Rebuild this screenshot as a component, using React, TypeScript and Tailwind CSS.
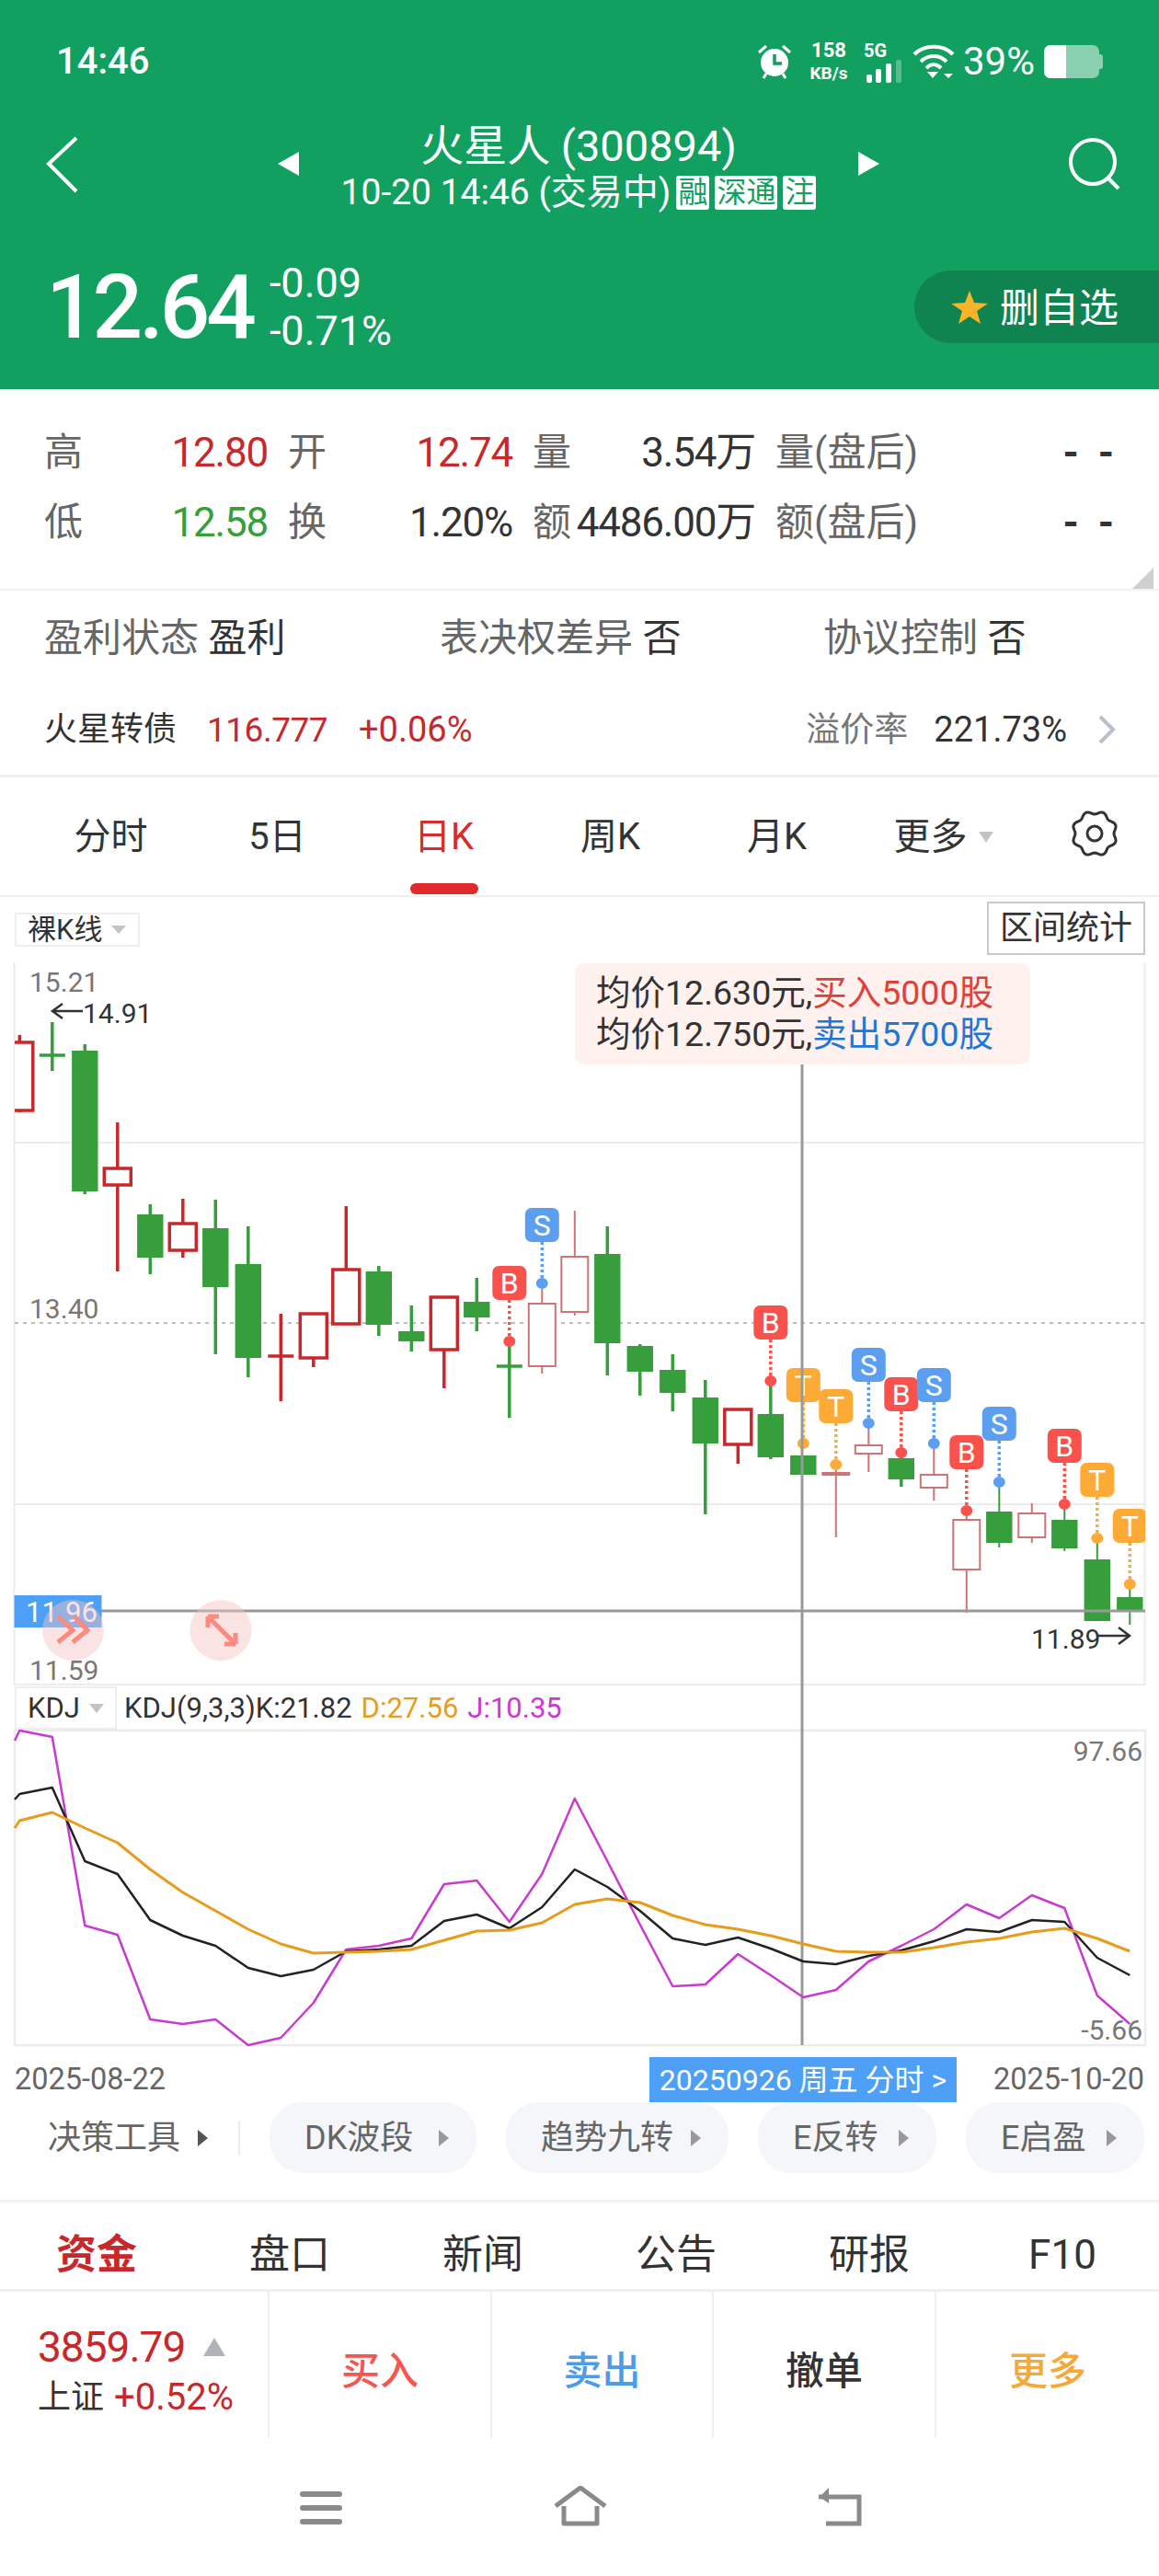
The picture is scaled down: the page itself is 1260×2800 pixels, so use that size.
import React from 'react';

const RED = '#c8282c';
const GREEN = '#369e3a';
const THIN_RED = '#cf7474';

// x of candle i, in page pixels
const cx = (i: number) => 21.3 + i * 35.5;

// [index, high, body top, body bottom, low, kind]: r = hollow red, t = thin hollow red, g = solid green
const candles: [number, number, number, number, number, string][] = [
  [0, 1125, 1133, 1207, 1209, 'r'],
  [1, 1111, 1147, 1147, 1164, 'g'],
  [2, 1135, 1142, 1295, 1298, 'g'],
  [3, 1220, 1270, 1288, 1382, 'r'],
  [4, 1309, 1320, 1367, 1385, 'g'],
  [5, 1303, 1330, 1359, 1367, 'r'],
  [6, 1304, 1335, 1399, 1472, 'g'],
  [7, 1333, 1374, 1476, 1497, 'g'],
  [8, 1428, 1474, 1474, 1523, 'r'],
  [9, 1428, 1428, 1476, 1486, 'r'],
  [10, 1311, 1380, 1439, 1439, 'r'],
  [11, 1376, 1382, 1440, 1452, 'g'],
  [12, 1419, 1447, 1458, 1469, 'g'],
  [13, 1409, 1410, 1467, 1509, 'r'],
  [14, 1389, 1415, 1432, 1447, 'g'],
  [15, 1463, 1485, 1485, 1541, 'g'],
  [16, 1401, 1417, 1485, 1493, 't'],
  [17, 1316, 1366, 1426, 1430, 't'],
  [18, 1333, 1363, 1460, 1495, 'g'],
  [19, 1461, 1463, 1491, 1517, 'g'],
  [20, 1472, 1489, 1514, 1534, 'g'],
  [21, 1500, 1519, 1569, 1646, 'g'],
  [22, 1532, 1532, 1570, 1591, 'r'],
  [23, 1502, 1537, 1584, 1586, 'g'],
  [24, 1582, 1582, 1603, 1603, 'g'],
  [25, 1593, 1601, 1603, 1671, 't'],
  [26, 1550, 1571, 1580, 1600, 't'],
  [27, 1580, 1585, 1608, 1616, 'g'],
  [28, 1572, 1603, 1617, 1631, 't'],
  [29, 1647, 1652, 1706, 1753, 't'],
  [30, 1615, 1643, 1677, 1682, 'g'],
  [31, 1634, 1645, 1671, 1677, 't'],
  [32, 1639, 1652, 1683, 1686, 'g'],
  [33, 1676, 1695, 1762, 1762, 'g'],
  [34, 1727, 1736, 1751, 1766, 'g'],
];

// [candle index, letter, badge top]
const marks: [number, string, number][] = [
  [15, 'B', 1376],
  [16, 'S', 1313],
  [23, 'B', 1419],
  [24, 'T', 1487],
  [25, 'T', 1510],
  [26, 'S', 1465],
  [27, 'B', 1497],
  [28, 'S', 1487],
  [29, 'B', 1560],
  [30, 'S', 1529],
  [32, 'B', 1553],
  [33, 'T', 1590],
  [34, 'T', 1640],
];
const markColor: Record<string, string> = { B: '#f9524c', S: '#5c9ff0', T: '#fdab36' };

const kLine = [1950, 1943, 2023, 2037, 2087, 2104, 2115, 2139, 2148, 2141, 2121, 2119, 2115, 2088, 2081, 2096, 2073, 2032, 2051, 2077, 2107, 2114, 2106, 2118, 2132, 2135, 2126, 2120, 2110, 2097, 2100, 2087, 2089, 2128, 2147];
const dLine = [1979, 1970, 1987, 2003, 2032, 2057, 2077, 2097, 2113, 2123, 2122, 2121, 2119, 2109, 2099, 2098, 2090, 2070, 2064, 2068, 2082, 2092, 2097, 2104, 2113, 2121, 2122, 2122, 2117, 2111, 2107, 2100, 2096, 2107, 2121];
const jLine = [1881, 1888, 2093, 2103, 2195, 2200, 2195, 2223, 2215, 2177, 2119, 2115, 2107, 2048, 2044, 2089, 2037, 1955, 2023, 2092, 2159, 2157, 2124, 2147, 2171, 2163, 2132, 2115, 2097, 2070, 2085, 2060, 2074, 2169, 2200];

const toPoints = (ys: number[], startY: number) =>
  `16,${startY} ` + ys.map((y, i) => `${cx(i)},${y}`).join(' ');

function Candle({ c }: { c: (typeof candles)[number] }) {
  const [i, hi, top, bot, lo, kind] = c;
  const x = cx(i);
  const color = kind === 'g' ? GREEN : kind === 'r' ? RED : THIN_RED;
  const thin = kind === 't' || i >= 30;
  const wick = thin ? 2 : 3.5;
  if (top === bot) {
    return (
      <g stroke={color} strokeWidth={wick}>
        <line x1={x} x2={x} y1={hi} y2={lo} />
        <line x1={x - 14} x2={x + 14} y1={top} y2={top} />
      </g>
    );
  }
  if (kind === 'g') {
    return (
      <g>
        <line x1={x} x2={x} y1={hi} y2={lo} stroke={color} strokeWidth={wick} />
        <rect x={x - 14.2} y={top} width={28.4} height={bot - top} fill={color} />
      </g>
    );
  }
  const sw = kind === 'r' ? 3.5 : 2;
  return (
    <g stroke={color} strokeWidth={wick}>
      <line x1={x} x2={x} y1={hi} y2={top} />
      <line x1={x} x2={x} y1={bot} y2={lo} />
      <rect x={x - 14.5} y={top} width={29} height={bot - top} fill="#fff" strokeWidth={sw} />
    </g>
  );
}

function Mark({ i, letter, top }: { i: number; letter: string; top: number }) {
  const x = cx(i);
  const color = markColor[letter];
  return (
    <g>
      <line x1={x} x2={x} y1={top + 37} y2={top + 80} stroke={color} strokeWidth={3.5} strokeDasharray="3 3" />
      <ellipse cx={x} cy={top + 82} rx={6.5} ry={6} fill={color} />
      <rect x={x - 18.5} y={top} width={37} height={37} rx={7} fill={color} />
      <text x={x} y={top + 30} textAnchor="middle" fontSize={32} fill="#fff">
        {letter}
      </text>
    </g>
  );
}

function ChartPanel() {
  return (
    <div className="relative h-[1261px]">
      <svg viewBox="0 975 1260 1261" className="block h-[1261px] w-[1260px]">
        <defs>
          <clipPath id="kline">
            <rect x="16" y="1046" width="1229" height="786" />
          </clipPath>
        </defs>
        {/* frame + grid */}
        <g stroke="#ececec" strokeWidth={2} fill="none">
          <line x1="15.5" x2="15.5" y1="1046" y2="1832" />
          <line x1="1244.5" x2="1244.5" y1="1046" y2="1832" />
          <line x1="16" x2="1245" y1="1242" y2="1242" />
          <line x1="16" x2="1245" y1="1635" y2="1635" />
          <line x1="16" x2="1245" y1="1831" y2="1831" />
          <rect x="16" y="1881" width="1229" height="342" strokeWidth={2.5} />
        </g>
        <line x1="16" x2="1245" y1="1438" y2="1438" stroke="#a8a8a8" strokeWidth={1.5} strokeDasharray="4 5" />

        <text x="32" y="1078" fontSize={30} fill="#777">15.21</text>
        <text x="32" y="1433" fontSize={30} fill="#777">13.40</text>
        <text x="32" y="1826" fontSize={30} fill="#777">11.59</text>

        <g clipPath="url(#kline)">
          {candles.map((c) => (
            <Candle key={c[0]} c={c} />
          ))}
          {marks.map(([i, letter, top]) => (
            <Mark key={i} i={i} letter={letter} top={top} />
          ))}
        </g>

        {/* max / min arrows */}
        <g stroke="#333" strokeWidth={2.5} fill="none">
          <path d="M90 1099H57M68 1091L57 1099L68 1107" />
          <path d="M1192 1778H1228M1216 1769L1228 1778L1216 1787" />
        </g>
        <text x="90" y="1112" fontSize={30} fill="#333">14.91</text>
        <text x="1121" y="1792" fontSize={30} fill="#333">11.89</text>

        {/* crosshair */}
        <line x1="16" x2="1245" y1="1751" y2="1751" stroke="#999" strokeWidth={3} />
        <line x1="872" x2="872" y1="1157" y2="2223" stroke="#999" strokeWidth={3} />
        <rect x="15.5" y="1734" width="95" height="35" fill="#4da0f5" />
        <text x="28" y="1763" fontSize={31} fill="#fff">11.96</text>

        {/* floating controls */}
        <ellipse cx="79.5" cy="1772" rx="33.5" ry="33" fill="#f5c4c0" fillOpacity={0.45} />
        <path d="M63 1757L79 1772L63 1785M81 1757L95 1772L79 1785" stroke="#fb8a80" strokeWidth={5} fill="none" />
        <ellipse cx="240" cy="1772" rx="33.5" ry="33" fill="#f5c4c0" fillOpacity={0.45} />
        <path d="M226 1757L256 1787M226 1757V1769M226 1757H238M256 1787V1775M256 1787H244" stroke="#fb8a80" strokeWidth={5} fill="none" />

        {/* KDJ */}
        <g fill="none" strokeWidth={2.5} strokeLinejoin="round">
          <polyline points={toPoints(jLine, 1892)} stroke="#c93ad0" />
          <polyline points={toPoints(kLine, 1956)} stroke="#222" />
          <polyline points={toPoints(dLine, 1987)} stroke="#e89c1c" strokeWidth={3} />
        </g>
        <text x="1242" y="1914" fontSize={30} fill="#777" textAnchor="end">97.66</text>
        <text x="1242" y="2217" fontSize={30} fill="#777" textAnchor="end">-5.66</text>
      </svg>

      {/* chart toolbar bits that sit over the drawing */}
      <div className="absolute left-[16px] top-[17px] flex h-[37px] w-[136px] items-center gap-[10px] border-2 border-[#eeeeee] pl-[12px] text-[31px] leading-none text-[#333]">
        裸K线
        <span className="h-0 w-0 border-x-[8px] border-t-[9px] border-x-transparent border-t-[#c4c4c4]" />
      </div>
      <div className="absolute left-[1073px] top-[5px] flex h-[58px] w-[172px] items-center justify-center border-2 border-[#c9c9c9] text-[36px] leading-none text-[#333]">
        区间统计
      </div>
      <div className="absolute left-[625px] top-[72px] flex h-[110px] w-[495px] flex-col justify-center rounded-[10px] bg-[#fff1ee] pl-[23px] text-[37.5px] leading-[45px] text-[#333]">
        <div>
          均价12.630元,<span className="text-[#e0403a]">买入5000股</span>
        </div>
        <div>
          均价12.750元,<span className="text-[#1c78d8]">卖出5700股</span>
        </div>
      </div>
      <div className="absolute left-[16px] top-[858px] flex h-[47px] w-[111px] items-center gap-[10px] border-2 border-[#eeeeee] pl-[12px] text-[31px] leading-none text-[#333]">
        KDJ
        <span className="h-0 w-0 border-x-[8px] border-t-[10px] border-x-transparent border-t-[#c4c4c4]" />
      </div>
      <div className="absolute left-[135px] top-[858px] flex h-[47px] items-center gap-[10px] text-[31px] leading-none">
        <span className="text-[#333]">KDJ(9,3,3)K:21.82</span>
        <span className="text-[#e89c1c]">D:27.56</span>
        <span className="text-[#c93ad0]">J:10.35</span>
      </div>
    </div>
  );
}

function StatusIcons() {
  return (
    <div className="flex items-center text-white">
      <svg width="40" height="40" viewBox="0 0 40 40" className="mr-[18px]">
        <circle cx="20" cy="21" r="15" fill="#fff" />
        <path d="M20 12V22H28" stroke="#12a061" strokeWidth="3.5" fill="none" />
        <path d="M3 10L11 3M37 10L29 3" stroke="#fff" strokeWidth="3" />
        <path d="M8 38L11 33M32 38L29 33" stroke="#fff" strokeWidth="3" />
      </svg>
      <div className="mr-[17px] flex w-[42px] flex-col items-center text-[22px] font-bold leading-[25px]">
        <span>158</span>
        <span className="text-[19px]">KB/s</span>
      </div>
      <div className="mr-[11px] flex w-[42px] flex-col">
        <span className="text-[20px] font-bold leading-[20px]">5G</span>
        <svg width="42" height="25" viewBox="0 0 42 25">
          <rect x="3" y="16" width="6" height="9" rx="2" fill="#fff" />
          <rect x="13" y="10" width="6" height="15" rx="2" fill="#fff" />
          <rect x="24" y="4" width="6" height="21" rx="2" fill="#fff" />
          <rect x="35" y="0" width="6" height="25" rx="2" fill="#fff" fillOpacity={0.3} />
        </svg>
      </div>
      <svg width="46" height="38" viewBox="0 0 46 38" className="mr-[9px]" fill="none" stroke="#fff" strokeWidth="4">
        <path d="M2 11C13 0 33 0 44 11" />
        <path d="M9 19C17 11 29 11 37 19" />
        <path d="M15 26C20 21 26 21 31 26" />
        <path d="M16 30H28L22 37Z" fill="#fff" stroke="none" />
        <path d="M34 32H44L39 37Z" fill="#fff" stroke="none" />
      </svg>
      <span className="mr-[10px] text-[42px] leading-none">39%</span>
      <div className="flex items-center">
        <div className="flex h-[36px] w-[60px] overflow-hidden rounded-[7px] bg-white/50">
          <div className="w-[24px] bg-white" />
        </div>
        <span className="h-[16px] w-[4px] rounded-r-[3px] bg-white/50" />
      </div>
    </div>
  );
}

function Header() {
  return (
    <header className="h-[423px] bg-[#12a061] text-white">
      <div className="flex h-[134px] items-center justify-between pl-[61px] pr-[61px]">
        <span className="text-[40px] font-medium leading-none">14:46</span>
        <StatusIcons />
      </div>
      <div className="flex h-[100px] items-start justify-between pl-[50px] pr-[42px]">
        <svg width="36" height="62" viewBox="0 0 36 62" className="mt-[14px]" fill="none" stroke="#fff" strokeWidth="4">
          <path d="M33 2L3 30L33 60" />
        </svg>
        <div className="ml-[10px] flex items-start gap-[46px]">
          <span className="mt-[31px] h-0 w-0 border-y-[13px] border-r-[23px] border-y-transparent border-r-white" />
          <div className="flex flex-col items-center">
            <div className="text-[47px] leading-[50px]">火星人 (300894)</div>
            <div className="mt-[2px] flex items-center text-[39px] leading-[46px]">
              10-20 14:46 (交易中)
              <span className="ml-[6px] rounded-[3px] bg-white px-[2px] text-[32px] leading-[37px] text-[#12a061]">融</span>
              <span className="ml-[6px] rounded-[3px] bg-white px-[2px] text-[32px] leading-[37px] text-[#12a061]">深通</span>
              <span className="ml-[6px] rounded-[3px] bg-white px-[2px] text-[32px] leading-[37px] text-[#12a061]">注</span>
            </div>
          </div>
          <span className="mt-[31px] h-0 w-0 border-y-[13px] border-l-[23px] border-y-transparent border-l-white" />
        </div>
        <svg width="56" height="56" viewBox="0 0 56 56" className="mt-[16px]" fill="none" stroke="#fff" strokeWidth="4">
          <circle cx="26" cy="26" r="24" />
          <path d="M42 43L54 55" />
        </svg>
      </div>
      <div className="mt-[60px] flex h-[79px] items-center justify-between pl-[50px]">
        <div className="flex items-center gap-[18px]">
          <span className="text-[96px] font-medium leading-none tracking-[-4px]">12.64</span>
          <div className="flex flex-col text-[45px] leading-[52px]">
            <span>-0.09</span>
            <span>-0.71%</span>
          </div>
        </div>
        <div className="flex h-[79px] w-[266px] items-center gap-[13px] rounded-l-full bg-[#0f8350] pl-[40px] pt-[4px] text-[43px] leading-none">
          <svg width="40" height="36" viewBox="0 0 40 36" className="-mt-[4px]">
            <path d="M20 0L25 13L40 14L28 22L32 36L20 28L8 36L12 22L0 14L15 13Z" fill="#fbb428" />
          </svg>
          删自选
        </div>
      </div>
    </header>
  );
}

function Stat({ label, value, color = 'text-[#333]' }: { label: string; value: string; color?: string }) {
  const valueClass = value === '- -' ? 'font-bold tracking-[5px] mr-[-5px]' : 'tracking-[-1.2px]';
  return (
    <div className="flex items-center justify-between whitespace-nowrap">
      <span className="text-[#666]">{label}</span>
      <span className={`text-[44px] ${valueClass} ${color}`}>{value}</span>
    </div>
  );
}

function Quote() {
  return (
    <>
      <section className="relative h-[217px] pl-[48px] pt-[31px] text-[42px]">
        <div className="grid grid-cols-[243px_244px_242px_368px] gap-x-[22px] leading-[76px]">
          <Stat label="高" value="12.80" color="text-[#c8282c]" />
          <Stat label="开" value="12.74" color="text-[#c8282c]" />
          <Stat label="量" value="3.54万" />
          <Stat label="量(盘后)" value="- -" />
          <Stat label="低" value="12.58" color="text-[#369e3a]" />
          <Stat label="换" value="1.20%" />
          <Stat label="额" value="4486.00万" />
          <Stat label="额(盘后)" value="- -" />
        </div>
        <span className="absolute bottom-0 right-[6px] h-0 w-0 border-b-[23px] border-l-[23px] border-b-[#cfcfcf] border-l-transparent" />
      </section>
      <section className="border-t-2 border-[#f2f2f2]">
        <div className="grid h-[100px] grid-cols-[430px_417px_auto] items-center pl-[48px] pt-[4px] text-[42px] leading-none">
          <div>
            <span className="text-[#666]">盈利状态</span> <span className="text-[#333]">盈利</span>
          </div>
          <div>
            <span className="text-[#666]">表决权差异</span> <span className="text-[#333]">否</span>
          </div>
          <div>
            <span className="text-[#666]">协议控制</span> <span className="text-[#333]">否</span>
          </div>
        </div>
        <div className="flex h-[100px] items-center pl-[48px] pr-[46px] pt-[2px] text-[36px] leading-none">
          <span className="text-[#333]">火星转债</span>
          <span className="ml-[33px] text-[37px] tracking-[-0.5px] text-[#c8282c]">116.777</span>
          <span className="ml-[34px] text-[38px] text-[#c8282c]">+0.06%</span>
          <span className="ml-auto text-[37px] text-[#777]">溢价率</span>
          <span className="ml-[28px] text-[38px] text-[#333]">221.73%</span>
          <svg width="22" height="32" viewBox="0 0 22 32" className="ml-[32px]" fill="none" stroke="#b8c0cc" strokeWidth="4">
            <path d="M4 2L18 16L4 30" />
          </svg>
        </div>
      </section>
    </>
  );
}

const periods = ['分时', '5日', '日K', '周K', '月K'];

// eight soft lobes, with dips on the axes
const gearOutline = Array.from({ length: 96 }, (_, k) => {
  const a = (k / 96) * Math.PI * 2;
  const r = 22.8 - 1.8 * Math.cos(8 * a);
  return `${(25 + r * Math.cos(a)).toFixed(2)},${(25 + r * Math.sin(a)).toFixed(2)}`;
}).join(' ');

function PeriodTabs() {
  return (
    <nav className="flex h-[133px] items-center border-t-[3px] border-b-2 border-[#f0f0f0] pl-[30px] text-[40px] leading-none text-[#333]">
      <div className="grid h-full w-[1086px] grid-cols-6">
        {periods.map((p) => (
          <div key={p} className={`relative flex items-center justify-center pt-[2px] ${p === '日K' ? 'text-[#d92b2b]' : ''}`}>
            {p}
            {p === '日K' && <span className="absolute bottom-[1px] h-[12px] w-[74px] rounded-full bg-[#e02a2a]" />}
          </div>
        ))}
        <div className="flex items-center justify-center gap-[12px] pt-[2px]">
          更多
          <span className="h-0 w-0 border-x-[8px] border-t-[12px] border-x-transparent border-t-[#c4c4c4]" />
        </div>
      </div>
      <svg width="50" height="50" viewBox="0 0 50 50" className="-mt-[6px] ml-[49px]" fill="none" stroke="#333" strokeWidth="3">
        <circle cx="25" cy="25" r="8" />
        <polygon points={gearOutline} strokeLinejoin="round" />
      </svg>
    </nav>
  );
}

const tools = [
  { label: 'DK波段', width: 'w-[225px]' },
  { label: '趋势九转', width: 'w-[242px]' },
  { label: 'E反转', width: 'w-[194px]' },
  { label: 'E启盈', width: 'w-[194px]' },
];

function ToolRow() {
  return (
    <div className="flex h-[109px] items-start border-b-[3px] border-[#f2f2f2] pl-[52px] text-[36px] leading-none text-[#666]">
      <div className="flex h-[77px] items-center">
        决策工具
        <span className="ml-[19px] h-0 w-0 border-y-[9px] border-l-[11px] border-y-transparent border-l-[#555]" />
        <span className="ml-[33px] h-[38px] w-[2px] bg-[#eeeeee]" />
      </div>
      <div className="ml-[32px] flex gap-[32px]">
        {tools.map((t) => (
          <div key={t.label} className={`flex h-[77px] items-center justify-between rounded-[36px] bg-[#f4f6fa] pl-[38px] pr-[30px] ${t.width}`}>
            {t.label}
            <span className="h-0 w-0 border-y-[9px] border-l-[11px] border-y-transparent border-l-[#999]" />
          </div>
        ))}
      </div>
    </div>
  );
}

const infoTabs = ['资金', '盘口', '新闻', '公告', '研报', 'F10'];

function TradeBar() {
  return (
    <div className="flex h-[162px] border-t-[3px] border-[#f0f0f0]">
      <div className="w-[293px] border-r-2 border-[#f0f0f0] pl-[41px] pt-[36px]">
        <div className="flex items-center gap-[20px] text-[46px] leading-[48px] tracking-[-1px] text-[#c8282c]">
          3859.79
          <span className="h-0 w-0 border-x-[12px] border-b-[20px] border-x-transparent border-b-[#b0b4ba]" />
        </div>
        <div className="mt-[9px] flex items-center gap-[11px] text-[36px] leading-[44px]">
          <span className="text-[#333]">上证</span>
          <span className="text-[40px] text-[#c8282c]">+0.52%</span>
        </div>
      </div>
      <div className="flex w-[242px] items-center justify-center border-r-2 border-[#f0f0f0] pt-[14px] text-[42px] font-medium text-[#f4574f]">买入</div>
      <div className="flex w-[241px] items-center justify-center border-r-2 border-[#f0f0f0] pt-[14px] text-[42px] font-medium text-[#4e9bea]">卖出</div>
      <div className="flex w-[242px] items-center justify-center border-r-2 border-[#f0f0f0] pt-[14px] text-[42px] font-medium text-[#333]">撤单</div>
      <div className="flex flex-1 items-center justify-center pt-[14px] text-[42px] font-medium text-[#f5a93a]">更多</div>
    </div>
  );
}

function SystemNav() {
  return (
    <div className="flex h-[147px] items-start justify-center pl-[3px] pt-[52px]">
      <svg width="46" height="36" viewBox="0 0 46 36" className="mt-[6px]" fill="#8a8a8a">
        <rect y="0" width="46" height="6" rx="3" />
        <rect y="15" width="46" height="6" rx="3" />
        <rect y="30" width="46" height="6" rx="3" />
      </svg>
      <svg width="58" height="44" viewBox="0 0 58 44" className="ml-[230px]" fill="none" stroke="#8a8a8a" strokeWidth="5" strokeLinejoin="round">
        <path d="M2 22L29 2L56 22" />
        <path d="M11 22V41H47V22" />
      </svg>
      <svg width="50" height="44" viewBox="0 0 50 44" className="ml-[227px]" fill="none" stroke="#8a8a8a" strokeWidth="5">
        <path d="M3 12H47V41H11" />
        <path d="M14 2L4 12L14 19" fill="#8a8a8a" stroke="none" />
      </svg>
    </div>
  );
}

function App() {
  return (
    <div className="h-[2800px] w-[1260px] overflow-hidden bg-white [font-family:Roboto,'Noto_Sans_CJK_SC',sans-serif]">
      <Header />
      <Quote />
      <PeriodTabs />
      <ChartPanel />

      {/* Date row */}
      <div className="relative flex h-[49px] items-center justify-between pl-[16px] pr-[16px] text-[32.5px] leading-none text-[#666]">
        <span>2025-08-22</span>
        <span>2025-10-20</span>
        <div className="absolute left-[706px] top-0 flex h-[49px] w-[334px] items-center justify-center bg-[#4da0f5] text-[32px] text-white">
          20250926 周五 分时 &gt;
        </div>
      </div>

      <ToolRow />

      {/* Info tabs */}
      <div className="grid h-[94px] grid-cols-6 items-center pt-[20px] text-center text-[44px] leading-none text-[#333]">
        {infoTabs.map((t) => (
          <div key={t} className={t === '资金' ? 'font-bold text-[#c8282c]' : ''}>
            {t}
          </div>
        ))}
      </div>

      <TradeBar />
      <SystemNav />
    </div>
  );
}

export default App;
